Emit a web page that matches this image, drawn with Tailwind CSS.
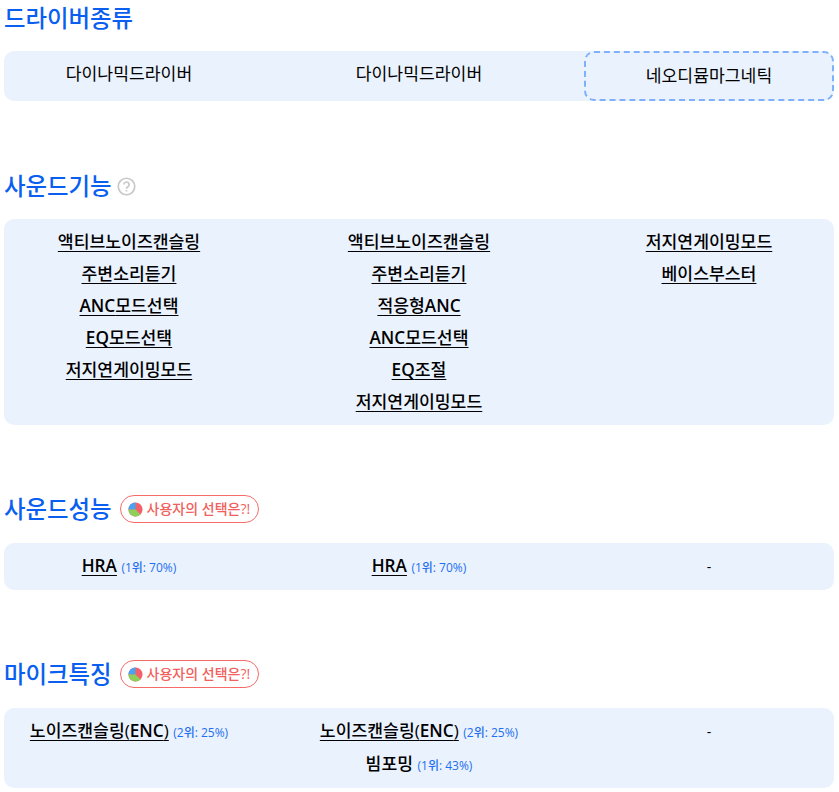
<!DOCTYPE html>
<html lang="ko">
  <head>
    <meta charset="UTF-8" />
    <title>이어폰 스펙</title>
    <script src="https://cdn.jsdelivr.net/npm/@tailwindcss/browser@4"></script>
  </head>
  <body class="bg-white text-black font-['Open_Sans','Noto_Sans_CJK_KR',sans-serif] text-[17.2px] leading-[32px] overflow-hidden">
    <div class="px-1 w-[838px]">
      <!-- 드라이버종류 -->
      <h2 class="h-[36px] flex items-center text-[23.4px] font-medium text-[#0a5ff0]">드라이버종류</h2>
      <div class="mt-[15px] grid grid-cols-3 gap-10 bg-[#eaf2fe] rounded-[10px] text-center">
        <div class="py-[7px]">다이나믹드라이버</div>
        <div class="py-[7px]">다이나믹드라이버</div>
        <div class="py-[7px] border-2 border-dashed border-[#7fb0fb] rounded-[10px]">네오디뮴마그네틱</div>
      </div>

      <!-- 사운드기능 -->
      <div class="mt-[67px] h-[36px] flex items-center gap-[5px]">
        <h2 class="text-[23.4px] font-medium text-[#0a5ff0]">사운드기능</h2>
        <svg class="w-[19px] h-[19px]" viewBox="0 0 19 19" fill="none" stroke="#c8c8c8" stroke-width="1.7">
          <circle cx="9.5" cy="9.5" r="8.25" />
          <path d="M6.9 7.6a2.6 2.6 0 1 1 4 2.2c-.9.6-1.4 1-1.4 2" />
          <path d="M9.5 13v1.5" />
        </svg>
      </div>
      <div class="mt-[15px] grid grid-cols-3 gap-10 bg-[#eaf2fe] rounded-[10px] text-center font-medium py-[7px]">
        <div class="flex flex-col underline underline-offset-[3px]">
          <span>액티브노이즈캔슬링</span>
          <span>주변소리듣기</span>
          <span><b class="font-semibold">ANC</b>모드선택</span>
          <span><b class="font-semibold">EQ</b>모드선택</span>
          <span>저지연게이밍모드</span>
        </div>
        <div class="flex flex-col underline underline-offset-[3px]">
          <span>액티브노이즈캔슬링</span>
          <span>주변소리듣기</span>
          <span>적응형<b class="font-semibold">ANC</b></span>
          <span><b class="font-semibold">ANC</b>모드선택</span>
          <span><b class="font-semibold">EQ</b>조절</span>
          <span>저지연게이밍모드</span>
        </div>
        <div class="flex flex-col underline underline-offset-[3px]">
          <span>저지연게이밍모드</span>
          <span>베이스부스터</span>
        </div>
      </div>

      <!-- 사운드성능 -->
      <div class="mt-[66px] h-[36px] flex items-center gap-2">
        <h2 class="text-[23.4px] font-medium text-[#0a5ff0]">사운드성능</h2>
        <div class="h-[28px] pl-[7px] pr-2 flex items-center gap-1 border border-[#f56b68] rounded-full text-[14px] font-medium text-[#f0605c]">
          <svg class="w-[15px] h-[15px]" viewBox="0 0 16 16">
            <circle cx="8" cy="8" r="7.5" fill="#f4606a" />
            <path d="M8 8V.5A7.5 7.5 0 0 0 .5 8z" fill="#46a4f2" />
            <path d="M8 8H.5A7.5 7.5 0 0 0 13.3 13.3z" fill="#8ecf5c" />
          </svg>
          사용자의 선택은?!
        </div>
      </div>
      <div class="mt-[16px] grid grid-cols-3 gap-10 bg-[#eaf2fe] rounded-[10px] text-center py-[7px]">
        <div class="h-[33px]"><span class="font-semibold underline underline-offset-[3px]">HRA</span> <span class="text-xs font-medium text-[#1f6ff0]">(1위: 70%)</span></div>
        <div class="h-[33px]"><span class="font-semibold underline underline-offset-[3px]">HRA</span> <span class="text-xs font-medium text-[#1f6ff0]">(1위: 70%)</span></div>
        <div class="h-[33px] text-sm/[33px]">-</div>
      </div>

      <!-- 마이크특징 -->
      <div class="mt-[66px] h-[36px] flex items-center gap-2">
        <h2 class="text-[23.4px] font-medium text-[#0a5ff0]">마이크특징</h2>
        <div class="h-[28px] pl-[7px] pr-2 flex items-center gap-1 border border-[#f56b68] rounded-full text-[14px] font-medium text-[#f0605c]">
          <svg class="w-[15px] h-[15px]" viewBox="0 0 16 16">
            <circle cx="8" cy="8" r="7.5" fill="#f4606a" />
            <path d="M8 8V.5A7.5 7.5 0 0 0 .5 8z" fill="#46a4f2" />
            <path d="M8 8H.5A7.5 7.5 0 0 0 13.3 13.3z" fill="#8ecf5c" />
          </svg>
          사용자의 선택은?!
        </div>
      </div>
      <div class="mt-[16px] grid grid-cols-3 gap-10 bg-[#eaf2fe] rounded-[10px] text-center py-[7px]">
        <div class="h-[33px]"><span class="font-medium underline underline-offset-[3px]">노이즈캔슬링(<b class="font-semibold">ENC</b>)</span> <span class="text-xs font-medium text-[#1f6ff0]">(2위: 25%)</span></div>
        <div class="flex flex-col">
          <div class="h-[33px]"><span class="font-medium underline underline-offset-[3px]">노이즈캔슬링(<b class="font-semibold">ENC</b>)</span> <span class="text-xs font-medium text-[#1f6ff0]">(2위: 25%)</span></div>
          <div class="h-[33px]"><span class="font-medium">빔포밍</span> <span class="text-xs font-medium text-[#1f6ff0]">(1위: 43%)</span></div>
        </div>
        <div class="h-[33px] text-sm/[33px]">-</div>
      </div>
    </div>
  </body>
</html>
